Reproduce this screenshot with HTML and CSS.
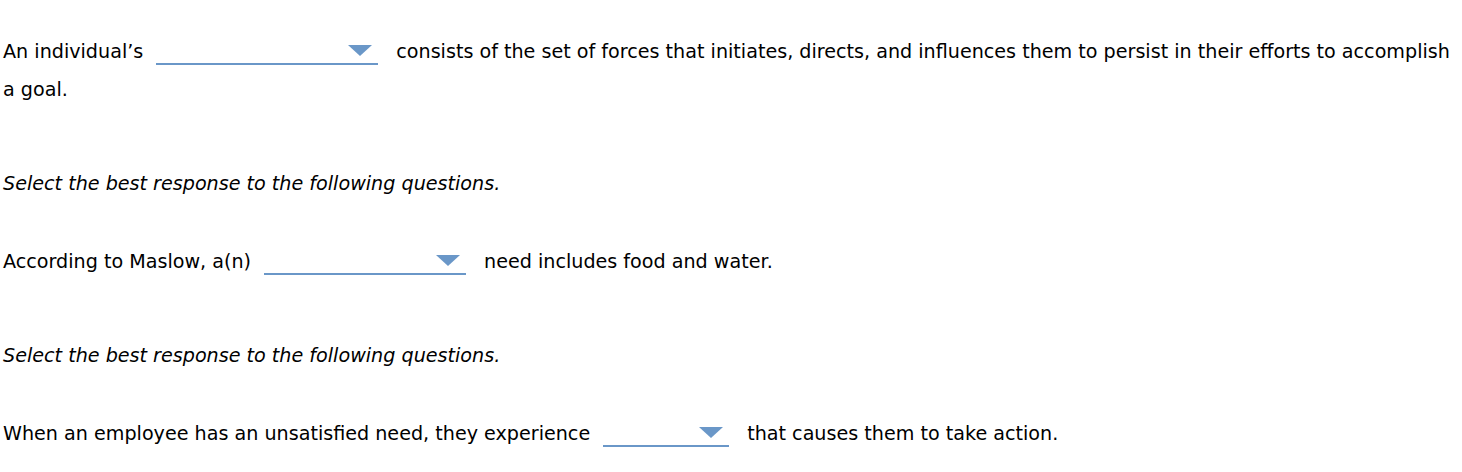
FILE: index.html
```html
<!DOCTYPE html>
<html lang="en">
<head>
<meta charset="utf-8">
<title>Questions</title>
<link rel="stylesheet" href="styles.css">
</head>
<body>
<main class="page">
  <p class="q">An individual’s<span class="dd dd-1"><svg class="tri" width="24" height="11" viewBox="0 0 24 11"><polygon points="0,0 24,0 12,11" fill="#6a97c8"/></svg></span>consists of the set of forces that initiates, directs, and influences them to persist in their efforts to accomplish a goal.</p>
  <p class="inst">Select the best response to the following questions.</p>
  <p class="q">According to Maslow, a(n)<span class="dd dd-2"><svg class="tri" width="24" height="11" viewBox="0 0 24 11"><polygon points="0,0 24,0 12,11" fill="#6a97c8"/></svg></span>need includes food and water.</p>
  <p class="inst">Select the best response to the following questions.</p>
  <p class="q">When an employee has an unsatisfied need, they experience<span class="dd dd-3"><svg class="tri" width="24" height="11" viewBox="0 0 24 11"><polygon points="0,0 24,0 12,11" fill="#6a97c8"/></svg></span>that causes them to take action.</p>
</main>
</body>
</html>
```
FILE: styles.css
```css
html, body {
  margin: 0;
  padding: 0;
  background: #fff;
}
.page {
  padding: 33px 3px 0 3px;
  font-family: "DejaVu Sans", Verdana, sans-serif;
  font-size: 19.15px;
  color: #000;
  width: 1458px;
  box-sizing: border-box;
}
.page p {
  margin: 0;
  line-height: 38px;
}
.inst {
  font-style: italic;
  margin-top: 56px !important;
}
.inst + .q {
  margin-top: 40px;
}
.dd {
  display: inline-block;
  box-sizing: border-box;
  height: 22px;
  padding: 2px 6px 0 0;
  border-bottom: 2px solid #6a97c8;
  vertical-align: -7px;
  margin: 0 18px 0 13px;
}
.dd-1 { width: 222px; }
.dd-2 { width: 202px; }
.dd-3 { width: 126px; }
.tri {
  display: block;
  margin-left: auto;
}
```
